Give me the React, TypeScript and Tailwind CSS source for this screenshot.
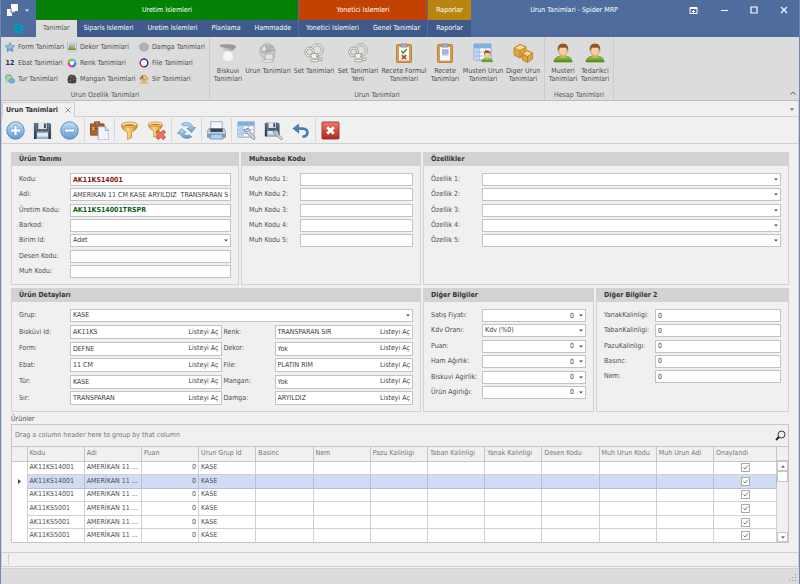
import { useState } from "react"
import type { ReactNode } from "react"
import clsx from "clsx"

const FIELD = "min-w-0 border border-[#c3c3c3] bg-white"

/* ---------- icons ---------- */

function Svg({ size = 20, children }: { size?: number; children: ReactNode }) {
  return <svg width={size} height={size} viewBox="0 0 20 20" aria-hidden="true" className="block shrink-0">{children}</svg>
}

function Gradients() {
  return (
    <svg width="0" height="0" className="absolute" aria-hidden="true">
      <defs>
        <linearGradient id="blue" x1="0" y1="0" x2="0" y2="1"><stop offset="0" stopColor="#c3e1f6" /><stop offset="1" stopColor="#5b9cd3" /></linearGradient>
        <linearGradient id="gold" x1="0" y1="0" x2="1" y2="0"><stop offset="0" stopColor="#d98c1f" /><stop offset=".4" stopColor="#fbdc8c" /><stop offset="1" stopColor="#cf8016" /></linearGradient>
        <linearGradient id="green" x1="0" y1="0" x2="0" y2="1"><stop offset="0" stopColor="#a5d04b" /><stop offset="1" stopColor="#4b8a17" /></linearGradient>
        <linearGradient id="red" x1="0" y1="0" x2="0" y2="1"><stop offset="0" stopColor="#ec7b6a" /><stop offset="1" stopColor="#b3261a" /></linearGradient>
        <linearGradient id="navy" x1="0" y1="0" x2="0" y2="1"><stop offset="0" stopColor="#5c6f88" /><stop offset="1" stopColor="#27384f" /></linearGradient>
        <linearGradient id="grey" x1="0" y1="0" x2="1" y2="0"><stop offset="0" stopColor="#e9e7e5" /><stop offset="1" stopColor="#8f8a86" /></linearGradient>
      </defs>
    </svg>
  )
}

function Wrench() {
  return (
    <path
      d="M8 8.500c-.8 2.800.8 5.200 3.800 5l4.700 5.500c1.400 1.300 3.300-.5 2.200-2l-4.900-4.800c.7-2.800-1.200-5-4-4.700l2.200 2.500-1.400 1.700z"
      fill="#dbe0e6" stroke="#66727f" strokeWidth=".8"
    />
  )
}

function Floppy() {
  return (
    <g>
      <path d="M1 2h3v9h12V2h1.500L19 3.500V19H1z" fill="url(#navy)" />
      <path d="M4 2h12v9H4z" fill="#4c5f78" />
      <path d="M5.500 2h9v6.500h-9z" fill="#e3e8ed" />
      <path d="M11.500 2.800h2v4.700h-2z" fill="#34455c" />
      <path d="M4 12h12v7H4z" fill="#dfe7ef" />
      <path d="M4 16.500h12V19H4z" fill="#8fb4d6" />
    </g>
  )
}

function Person() {
  return (
    <g>
      <path d="M1 19c0-4 3-5.500 7-6h4c4 .5 7 2 7 6z" fill="url(#green)" stroke="#53861f" strokeWidth=".6" />
      <path d="M7.500 11h5v2.500l-2.500 2-2.500-2z" fill="#eab382" />
      <ellipse cx="10" cy="7.500" rx="4" ry="5.500" fill="#f7d0a2" stroke="#a96b35" strokeWidth=".5" />
      <path d="M5 9C3.900 3.500 6 .6 10 .6s6.100 2.900 5 8.400c-.5-2.500-1-3.900-2.200-4.600-2 .6-4 .4-5.600 0C6 5.500 5.400 7.200 5 9z" fill="#9a5523" />
    </g>
  )
}

function Plates() {
  return (
    <g fill="#eeeeea" stroke="#93938d" strokeWidth=".8">
      <ellipse cx="10.500" cy="17.500" rx="4.500" ry="1.400" />
      <circle cx="13" cy="7" r="6.300" />
      <circle cx="13" cy="7" r="4.200" fill="#e0e0dc" />
      <circle cx="5.500" cy="9" r="4.900" />
      <circle cx="5.500" cy="9" r="3" fill="#e0e0dc" />
      <path d="M7 10.500h6c.3 3.500-.7 5.500-3 5.500s-3.300-2-3-5.500z" />
      <path d="M13 11.500c2.200-.3 2.200 2.500 0 2.700" fill="none" />
      <path d="M14.500 15h3.500v2.500h-3.500z" />
    </g>
  )
}

function Clipboard() {
  return (
    <g>
      <rect x="2.500" y="1.500" width="15" height="18" rx="1" fill="#d99a4b" stroke="#a96a22" strokeWidth=".7" />
      <path d="M5 4h10v13.500H5z" fill="#f7faff" />
      <path d="M7 .8h6v3.400H7z" fill="#a7afb8" stroke="#6e7781" strokeWidth=".5" />
    </g>
  )
}

function Funnel() {
  return (
    <g>
      <path d="M1.800 4c0 3.500 1.500 6 6.200 7.500v7.800l4-1.800v-6c4.700-1.500 6.200-4 6.200-7.500z" fill="url(#gold)" stroke="#b77714" strokeWidth=".7" />
      <ellipse cx="10" cy="3.800" rx="8.200" ry="2.700" fill="#fbe4a6" stroke="#b77714" strokeWidth=".7" />
      <path d="M4 4.500c2 1.300 10 1.300 12 0-2-1.500-10-1.500-12 0z" fill="#c57c1a" />
    </g>
  )
}

function Sheet() {
  return (
    <g>
      <path d="M1 1h17v16H1z" fill="#f8fbff" stroke="#7191b8" strokeWidth=".8" />
      <path d="M1 1h17v4H1z" fill="#78b1e0" />
      <path d="M1 5h5.500v12H1z" fill="#b9d8f1" />
      <path d="M1 5h17M1 9h17M1 13h17M6.600 1v16M12.300 1v16" stroke="#9bb5d2" strokeWidth=".7" />
    </g>
  )
}

const ICONS: Record<string, ReactNode> = {
  star: <path d="M10 1l2.800 6 6.400.8-4.700 4.500 1.200 6.500L10 15.600l-5.700 3.200 1.200-6.500L.8 7.800 7.200 7z" fill="url(#blue)" stroke="#3a79b5" strokeWidth="1.300" />,
  shapes: (
    <g strokeWidth="1">
      <circle cx="7" cy="7" r="6" fill="#8ec4ed" stroke="#4c8dc6" />
      <rect x="3" y="4" width="11" height="11" rx="1" fill="#bfe08c" stroke="#6b9e3a" />
      <rect x="8" y="9" width="11" height="9" rx="4" fill="#6fb5ea" stroke="#3a79b5" />
    </g>
  ),
  picture: (
    <g>
      <path d="M1 2h18v16H1z" fill="#f5f8fb" stroke="#7c93b0" />
      <path d="M3 4h14v12H3z" fill="#8fc3ec" />
      <path d="M3 16v-4l4-4 4 4 3-2 3 3v3z" fill="#5d9736" />
      <path d="M7 7h7v6H7z" fill="#e7a42f" />
    </g>
  ),
  colors: (
    <g strokeWidth="5" fill="none">
      <path d="M10 3.500A6.500 6.500 0 0 1 16.500 10" stroke="#52c4e8" />
      <path d="M16.500 10A6.500 6.500 0 0 1 10 16.500" stroke="#4b6fe0" />
      <path d="M10 16.500A6.500 6.500 0 0 1 3.500 10" stroke="#e545a0" />
      <path d="M3.500 10A6.500 6.500 0 0 1 10 3.500" stroke="#7bc94a" />
      <circle cx="10" cy="10" r="4" fill="#fff" stroke="none" />
    </g>
  ),
  stone: (
    <g>
      <path d="M3 4l5-3 8 2 3 6-1 9-7 1-9-1-1-7z" fill="#4e4145" />
      <path d="M5 6l4-2 3 2-4 2zM12 10l4-1 1 2-4 2zM4 12l4-1 1 2-4 2z" fill="#75676b" />
    </g>
  ),
  stamp: (
    <g fill="none" stroke="#8b8b8b" strokeWidth="1.500">
      <circle cx="10" cy="10" r="8" />
      <circle cx="10" cy="10" r="5" />
      <path d="M0 8h20v4H0z" fill="#cfcfcf" strokeWidth="1" />
      <path d="M3 10h14" strokeDasharray="2 1" />
    </g>
  ),
  ring: (
    <g fill="none" strokeWidth="3">
      <path d="M10 2.500a7.500 7.500 0 0 1 0 15" stroke="#30306f" />
      <path d="M10 17.500a7.500 7.500 0 0 1 0-15" stroke="#a0306a" />
      <path d="M4.700 4.700A7.500 7.500 0 0 1 15.300 4.700" stroke="#3c48a8" />
      <circle cx="10" cy="10" r="6" fill="#f8f8fa" stroke="none" />
    </g>
  ),
  bucket: (
    <g>
      <path d="M5 5l7-3 6 8-8 6-6-5z" fill="#edc372" stroke="#8c6a2c" />
      <path d="M5 5c-4 1-4 5-3 8 1-3 1-4 3-5z" fill="#b6502a" />
      <path d="M7 2v7l4 2" stroke="#56534f" fill="none" strokeWidth="1.500" />
      <path d="M2 17h16v2H2z" fill="#e4a12d" />
    </g>
  ),
  biscuit: (
    <g>
      <path d="M1.500 3c1 3.500 4 5.500 8 5.500S17 6.500 18 3.500z" fill="url(#grey)" />
      <ellipse cx="9.800" cy="3.200" rx="8.300" ry="2" fill="#9d9691" transform="rotate(3 10 3)" />
      <circle cx="10" cy="13.500" r="6" fill="#eeedec" stroke="#cfcecc" strokeWidth=".7" />
      <circle cx="10" cy="13" r="4" fill="#f8f7f6" />
    </g>
  ),
  product: (
    <g stroke="#a3a8a6" strokeWidth=".7">
      <circle cx="9.500" cy="8.500" r="7.800" fill="#c9cccb" />
      <circle cx="6.500" cy="6" r="3" fill="#dfe2e1" />
      <circle cx="12" cy="5.500" r="3.300" fill="#b9bebc" />
      <path d="M3 10l4-2 3 1 3-2 4 1M8 2l1 5-2 6M13 3l-2 5" fill="none" stroke="#8f9694" />
      <path d="M7 11h8v6H7z" fill="#e2e4e3" />
      <path d="M15 12.500c2.500-.5 2.500 3 0 3" fill="none" />
      <ellipse cx="10" cy="18" rx="6" ry="1.300" fill="#eceded" />
    </g>
  ),
  plates: <Plates />,
  clipCheck: (
    <g>
      <Clipboard />
      <path d="M7.500 8l1.800 2 3.500-4" stroke="#3f9a34" strokeWidth="1.600" fill="none" />
      <path d="M7.800 12.200l4.400 4M12.200 12.200l-4.400 4" stroke="#cf3a2c" strokeWidth="1.700" />
    </g>
  ),
  clipText: (
    <g>
      <Clipboard />
      <path d="M7 6h6.500v6.500H7z" fill="#a9c4e6" />
      <path d="M7 8h6.500M7 10h6.500" stroke="#86a7d2" strokeWidth=".7" />
    </g>
  ),
  sheetPerson: <g><Sheet /><g transform="translate(8 7) scale(.62)"><Person /></g></g>,
  boxes: (
    <g stroke="#a8721a" strokeWidth=".7">
      <path d="M1 5l6-3.500L13 4v7l-6 4-6-3z" fill="#e2a53a" />
      <path d="M1 5l6-3.500L13 4 7 7.500z" fill="#fbdc8f" />
      <path d="M7 7.500V15" />
      <path d="M9.500 10.500l4.500-3 5.500 2.500v6l-5 3.500-5-2.500z" fill="#e2a53a" />
      <path d="M9.500 10.500l4.500-3 5.500 2.500-5 3.500z" fill="#fbdc8f" />
      <path d="M14.500 13.500v6" />
    </g>
  ),
  person: <Person />,
  add: (
    <g>
      <circle cx="10" cy="10" r="9.200" fill="url(#blue)" stroke="#6187ae" strokeWidth="1" />
      <path d="M10 4.500v11M4.500 10h11" stroke="#5d8fc0" strokeWidth="3.600" />
      <path d="M10 5v10M5 10h10" stroke="#fff" strokeWidth="2.400" />
    </g>
  ),
  remove: (
    <g>
      <circle cx="10" cy="10" r="9.200" fill="url(#blue)" stroke="#6187ae" strokeWidth="1" />
      <path d="M4.500 10h11" stroke="#5d8fc0" strokeWidth="3.600" />
      <path d="M5 10h10" stroke="#fff" strokeWidth="2.400" />
    </g>
  ),
  save: <Floppy />,
  paste: (
    <g>
      <path d="M5 3V1.200h5V3" fill="none" stroke="#6b3d1c" strokeWidth="1.300" />
      <rect x="0" y="3" width="15" height="12" rx="1" fill="#a86431" stroke="#6f3c17" strokeWidth=".7" />
      <path d="M0 8h15" stroke="#6f3c17" />
      <path d="M2.500 6.500h2v3h-2z" fill="#f1c35c" />
      <path d="M8.500 6H16l4 4v10H8.500z" fill="#f0f5fb" stroke="#7f93ad" strokeWidth=".8" />
      <path d="M16 6v4h4" fill="#cddcec" stroke="#7f93ad" strokeWidth=".7" />
    </g>
  ),
  filter: <Funnel />,
  unfilter: (
    <g>
      <g transform="scale(.88)"><Funnel /></g>
      <path d="M10.500 10.500l8 8M18.500 10.500l-8 8" stroke="#b8402c" strokeWidth="4" />
      <path d="M11 11l7 7M18 11l-7 7" stroke="#f0745e" strokeWidth="2.800" />
    </g>
  ),
  refresh: (
    <g fill="url(#blue)" stroke="#5d8fc0" strokeWidth=".8">
      <path d="M4.500 3.500C9 .2 15 1.500 17 7l2.500-.2-4 5.200L10.500 8l2.700-.5C12 4.800 9.500 4 7.500 5.500z" />
      <path d="M15.500 16.500C11 19.800 5 18.500 3 13l-2.500.2L4.500 8l5 4-2.700.5c1.200 2.700 3.700 3.500 5.700 2z" />
    </g>
  ),
  print: (
    <g>
      <path d="M4 .8h12V9H4z" fill="#f3f7fc" stroke="#7b8ba1" strokeWidth=".7" />
      <path d="M2 8h16l2 4v5H0v-5z" fill="#c6ced9" stroke="#6a7b91" strokeWidth=".7" />
      <path d="M3.500 8h13v3.500h-13z" fill="#35455b" />
      <path d="M0 13.500h20V17H0z" fill="#8c9aad" />
      <path d="M4 14h12l1 5H3z" fill="#a8d3f5" stroke="#5a80a8" strokeWidth=".7" />
    </g>
  ),
  sheetTool: <g><Sheet /><Wrench /></g>,
  saveTool: <g><g transform="scale(.86)"><Floppy /></g><g transform="translate(3 3) scale(.86)"><Wrench /></g></g>,
  undo: (
    <g>
      <path d="M5 8h7.500c6.500 0 6.500 8.500-.5 8.500" fill="none" stroke="#4a7fb5" strokeWidth="2.800" />
      <path d="M8.500 2.500v11L1.500 8z" fill="#4a7fb5" />
    </g>
  ),
  close: (
    <g>
      <rect x="1" y="1" width="18" height="18" rx="1" fill="url(#red)" stroke="#93281f" strokeWidth=".8" />
      <path d="M6.500 6.500l7 7M13.500 6.500l-7 7" stroke="#fff" strokeWidth="3" />
    </g>
  ),
}

function Arrow({ up = false }: { up?: boolean }) {
  return (
    <svg width="4" height="3" viewBox="0 0 4 3" aria-hidden="true" className="block shrink-0">
      <path d={up ? "M0 2.500h4L2 .5z" : "M0 .5h4L2 2.500z"} fill="#4b4b4b" />
    </svg>
  )
}

/* ---------- title bar and ribbon ---------- */

const TAB_GROUPS = [
  { title: "Uretim Islemleri", color: "bg-[#058205]", width: "w-[262px]", tabs: ["Tanimlar", "Siparis Islemleri", "Uretim Islemleri", "Planlama", "Hammadde"] },
  { title: "Yonetici Islemleri", color: "bg-[#c24103]", width: "w-[128px]", tabs: ["Yonetici Islemleri", "Genel Tanimlar"] },
  { title: "Raporlar", color: "bg-[#b8860f]", width: "w-[43px]", tabs: ["Raporlar"] },
]

function TitleBar() {
  const [tab, setTab] = useState("Tanimlar")
  return (
    <header className="flex h-[37px] bg-[#4e6d9e] text-white">
      <div className="flex w-[35px] shrink-0 flex-col">
        <div className="flex h-5 items-center gap-[7px] pl-[6px]">
          <svg width="11" height="12" viewBox="0 0 11 12" aria-hidden="true">
            <path d="M4 0h7v7H8v2H5v3H0V5h4z" fill="#fff" />
            <path d="M4 4.500v3.800h4" fill="none" stroke="#4e6d9e" />
          </svg>
          <svg width="4" height="3" viewBox="0 0 4 3" aria-hidden="true"><path d="M0 .5h4L2 2.500z" fill="#fff" /></svg>
        </div>
        <button aria-label="Menu" className="flex h-[17px] items-center justify-center">
          <svg width="11" height="11" viewBox="0 0 11 11">
            <circle cx="5.500" cy="5.500" r="5" fill="#0d9dbd" />
            <path d="M.5 5.500h10M5.500.5v10M2 2.500c2 1.500 5 1.500 7 0M2 8.500c2-1.500 5-1.500 7 0" fill="none" stroke="#087a9c" strokeWidth=".7" />
          </svg>
        </button>
      </div>
      <div className="flex gap-px">
        {TAB_GROUPS.map(group => (
          <div key={group.title} className={clsx("flex flex-col", group.width)}>
            <div className={clsx("flex h-5 items-center justify-center", group.color)}>{group.title}</div>
            <div className="flex h-[17px] justify-between bg-[#3d5a8a]">
              {group.tabs.map(name => (
                <button
                  key={name}
                  onClick={() => setTab(name)}
                  className={clsx("flex-auto whitespace-nowrap", name === tab ? "bg-[#dcdcdc] text-[#555]" : "text-white")}
                >
                  {name}
                </button>
              ))}
            </div>
          </div>
        ))}
      </div>
      <div className="flex h-5 flex-1 items-center">
        <h1 className="flex-1 pr-3 text-center">Urun Tanimlari - Spider MRP</h1>
        <div className="flex items-center gap-[22px] pr-[11px]">
          <button aria-label="Ribbon display options">
            <svg width="9" height="9" viewBox="0 0 9 9"><path d="M1 1.500h7v6H1zM1 2.500h7M4.500 4v3M3 5.500h3" fill="none" stroke="#fff" /></svg>
          </button>
          <button aria-label="Minimize">
            <svg width="8" height="8" viewBox="0 0 8 8"><path d="M1 4.500h7" stroke="#fff" /></svg>
          </button>
          <button aria-label="Maximize">
            <svg width="8" height="8" viewBox="0 0 8 8"><path d="M1 1h6v6H1z" fill="none" stroke="#fff" strokeWidth="1.200" /></svg>
          </button>
          <button aria-label="Close">
            <svg width="8" height="8" viewBox="0 0 8 8"><path d="M1 1l6 6M7 1L1 7" stroke="#fff" strokeWidth="1.100" /></svg>
          </button>
        </div>
      </div>
    </header>
  )
}

const SMALL = [
  [["star", "Form Tanimlari"], ["12", "Ebat Tanimlari"], ["shapes", "Tur Tanimlari"]],
  [["picture", "Dekor Tanimlari"], ["colors", "Renk Tanimlari"], ["stone", "Mangan Tanimlari"]],
  [["stamp", "Damga Tanimlari"], ["ring", "File Tanimlari"], ["bucket", "Sir Tanimlari"]],
]

const LARGE = [
  { icon: "biscuit", lines: ["Biskuvi", "Tanimlari"], width: "w-8" },
  { icon: "product", lines: ["Urun Tanimlari"], width: "w-12" },
  { icon: "plates", lines: ["Set Tanimlari"], width: "w-11" },
  { icon: "plates", lines: ["Set Tanimlari", "Yeni"], width: "w-11" },
  { icon: "clipCheck", lines: ["Recete Formul", "Tanimlari"], width: "w-12" },
  { icon: "clipText", lines: ["Recete", "Tanimlari"], width: "w-[34px]" },
  { icon: "sheetPerson", lines: ["Musteri Urun", "Tanimlari"], width: "w-[42px]" },
  { icon: "boxes", lines: ["Diger Urun", "Tanimlari"], width: "w-[38px]" },
]

const ACCOUNTS = [
  { icon: "person", lines: ["Musteri", "Tanimlari"], width: "w-8" },
  { icon: "person", lines: ["Tedarikci", "Tanimlari"], width: "w-8" },
]

function RibbonGroup({ caption, children }: { caption: string; children: ReactNode }) {
  return (
    <section className="flex flex-col justify-between border-r border-[#cbcbcb] px-[2px]">
      <div className="flex">{children}</div>
      <h2 className="h-[10px] text-center leading-[10px] text-[#555]">{caption}</h2>
    </section>
  )
}

function LargeButton({ icon, lines, width }: { icon: string; lines: string[]; width: string }) {
  return (
    <button className={clsx("flex flex-col items-center gap-1 whitespace-nowrap pt-[6px] leading-[8px]", width)}>
      <Svg>{ICONS[icon]}</Svg>
      <span className="flex flex-col">{lines.map(line => <span key={line}>{line}</span>)}</span>
    </button>
  )
}

function Ribbon() {
  return (
    <div className="flex h-16 border-b border-[#bdbdbd] bg-[#dcdcdc] text-[#4d4d4d]">
      <RibbonGroup caption="Urun Ozellik Tanimlari">
        <div className="flex pl-[2px] pt-[2px]">
          {SMALL.map((column, i) => (
            <div key={i} className={clsx("flex flex-col", i === 0 && "w-[62px]", i === 1 && "w-[72px]", i === 2 && "w-[68px]")}>
              {column.map(([icon, name]) => (
                <button key={name} className="flex h-4 items-center gap-[3px] whitespace-nowrap">
                  {icon === "12" ? <span className="w-[10px] font-bold text-[#1e2b47]">12</span> : <Svg size={10}>{ICONS[icon]}</Svg>}
                  {name}
                </button>
              ))}
            </div>
          ))}
        </div>
      </RibbonGroup>
      <RibbonGroup caption="Urun Tanimlari">{LARGE.map(b => <LargeButton key={b.icon + b.lines.join()} {...b} />)}</RibbonGroup>
      <RibbonGroup caption="Hesap Tanimlari">{ACCOUNTS.map(b => <LargeButton key={b.lines[0]} {...b} />)}</RibbonGroup>
      <button aria-label="Collapse ribbon" className="ml-auto self-end pb-[5px] pr-[3px]">
        <svg width="6" height="4" viewBox="0 0 6 4"><path d="M.5 3.500L3 1l2.500 2.500" fill="none" stroke="#555" /></svg>
      </button>
    </div>
  )
}

const TOOLS = [
  [["add", "Yeni"], ["save", "Kaydet"], ["remove", "Sil"]],
  [["paste", "Yapistir"]],
  [["filter", "Filtre"], ["unfilter", "Filtreyi kaldir"]],
  [["refresh", "Yenile"]],
  [["print", "Yazdir"]],
  [["sheetTool", "Tablo ayarlari"], ["saveTool", "Ayarlari kaydet"], ["undo", "Geri al"]],
  [["close", "Kapat"]],
]

function DocumentBar() {
  return (
    <>
      <div className="flex h-4 items-end justify-between border-b border-[#d0d0d0] pr-1 pt-px">
        <div className="-mb-px flex h-[15px] items-center gap-[7px] border border-b-0 border-[#d0d0d0] bg-[#f0f0f0] px-[3px] font-bold text-[#333]">
          Urun Tanimlari
          <button aria-label="Close tab">
            <svg width="6" height="6" viewBox="0 0 6 6"><path d="M.5.5l5 5M5.500.5l-5 5" stroke="#777" strokeWidth=".8" /></svg>
          </button>
        </div>
        <button aria-label="Open tabs" className="self-center"><Arrow /></button>
      </div>
      <div className="flex h-[27px] items-center border-b border-[#d0d0d0]">
        {TOOLS.map((group, i) => (
          <div key={i} className="flex items-center">
            {i > 0 && <div className="mx-px h-6 w-px bg-[#d9d9d9]" />}
            {group.map(([icon, label]) => (
              <button key={icon} aria-label={label} className="flex w-[27px] justify-center"><Svg size={19}>{ICONS[icon]}</Svg></button>
            ))}
          </div>
        ))}
      </div>
    </>
  )
}

/* ---------- form ---------- */

function Panel({ title, children }: { title: string; children: ReactNode }) {
  return (
    <section className="min-w-0 border border-[#d2d2d2]">
      <h2 className="h-[13px] bg-[#d2d2d2] pl-[7px] font-bold leading-[13px] text-[#333]">{title}</h2>
      <div className="px-[7px] pt-[7px]">{children}</div>
    </section>
  )
}

type RowProps = { label: string; value?: string; kind?: "text" | "select" | "calc" | "lookup"; tone?: string }

function Row({ label, value = "", kind = "text", tone = "text-[#3c3c3c]" }: RowProps) {
  const id = label.toLowerCase().replace(/[^\p{L}\d]+/gu, "-")
  const size = kind === "lookup" ? "h-[14px]" : "h-[13px]"
  return (
    <div className={clsx("flex items-center", size)}>
      <label htmlFor={id} className="w-[51px] shrink-0 whitespace-nowrap">{label}</label>
      {kind === "text" && <input id={id} defaultValue={value} className={clsx(FIELD, "h-full flex-1 px-[2px]", tone)} />}
      {kind === "select" && (
        <div className="relative h-full min-w-0 flex-1">
          <select id={id} defaultValue={value} className={clsx(FIELD, "block h-full w-full appearance-none px-[2px]", tone)}>
            <option>{value}</option>
          </select>
          <span className="pointer-events-none absolute inset-y-0 right-[3px] flex items-center"><Arrow /></span>
        </div>
      )}
      {kind === "calc" && (
        <div className={clsx(FIELD, "flex h-full flex-1 items-center pr-[2px]", tone)}>
          <input id={id} defaultValue={value} className="h-full w-0 flex-1 text-right" />
          <button aria-label={`${label} hesapla`} className="pl-[5px]"><Arrow /></button>
        </div>
      )}
      {kind === "lookup" && (
        <div className={clsx(FIELD, "flex h-full flex-1 items-center px-[2px]", tone)}>
          <input id={id} defaultValue={value} className="h-full w-0 flex-1" />
          <button className="whitespace-nowrap">Listeyi Aç</button>
        </div>
      )}
    </div>
  )
}

const LOOKUPS = [
  [["Bisküvi Id:", "AK11KS"], ["Form:", "DEFNE"], ["Ebat:", "11 CM"], ["Tür:", "KASE"], ["Sır:", "TRANSPARAN"]],
  [["Renk:", "TRANSPARAN SIR"], ["Dekor:", "Yok"], ["File:", "PLATİN RİM"], ["Mangan:", "Yok"], ["Damga:", "ARYILDIZ"]],
]

function ProductForm() {
  return (
    <>
      <div className="grid h-[133px] grid-cols-[228fr_180fr_366fr] gap-[2px]">
        <Panel title="Ürün Tanımı">
          <div className="flex h-[105px] flex-col justify-between">
            <Row label="Kodu:" value="AK11KS14001" tone="font-bold text-[#8b1515]" />
            <Row label="Adi:" value="AMERİKAN 11 CM KASE ARYILDIZ  TRANSPARAN SIR" />
            <Row label="Üretim Kodu:" value="AK11KS14001TRSPR" tone="font-bold text-[#0b5f1b]" />
            <Row label="Barkod:" />
            <Row label="Birim Id:" value="Adet" kind="select" />
            <Row label="Desen Kodu:" />
            <Row label="Muh Kodu:" />
          </div>
        </Panel>
        <Panel title="Muhasebe Kodu">
          <div className="flex h-[74px] flex-col justify-between">
            {[1, 2, 3, 4, 5].map(n => <Row key={n} label={`Muh Kodu ${n}:`} />)}
          </div>
        </Panel>
        <Panel title="Özellikler">
          <div className="flex h-[74px] flex-col justify-between">
            {[1, 2, 3, 4, 5].map(n => <Row key={n} label={`Özellik ${n}:`} kind="select" />)}
          </div>
        </Panel>
      </div>
      <div className="mt-[3px] grid h-[124px] grid-cols-[410fr_171fr_193fr] gap-[2px]">
        <Panel title="Ürün Detayları">
          <Row label="Grup:" value="KASE" kind="select" />
          <div className="mt-[3px] grid h-20 grid-cols-[202fr_189fr] gap-[2px]">
            {LOOKUPS.map((column, i) => (
              <div key={i} className="flex flex-col justify-between">
                {column.map(([label, value]) => <Row key={label} label={label} value={value} kind="lookup" />)}
              </div>
            ))}
          </div>
        </Panel>
        <Panel title="Diğer Bilgiler">
          <div className="flex h-[90px] flex-col justify-between">
            <Row label="Satış Fiyatı:" value="0" kind="calc" />
            <Row label="Kdv Oranı:" value="Kdv (%0)" kind="select" />
            <Row label="Puan:" value="0" kind="calc" />
            <Row label="Ham Ağırlık:" value="0" kind="calc" />
            <Row label="Biskuvi Agirlik:" value="0" kind="calc" />
            <Row label="Ürün Agirlığı:" value="0" kind="calc" />
          </div>
        </Panel>
        <Panel title="Diğer Bilgiler 2">
          <div className="flex h-[74px] flex-col justify-between">
            {["YanakKalinligi:", "TabanKalinligi:", "PazuKalinligı:", "Basınc:", "Nem:"].map(label => <Row key={label} label={label} value="0" />)}
          </div>
        </Panel>
      </div>
    </>
  )
}

/* ---------- product grid ---------- */

const COLUMNS = ["Kodu", "Adi", "Puan", "Urun Grup Id", "Basinc", "Nem", "Pazu Kalinligi", "Taban Kalinligi", "Yanak Kalinligi", "Desen Kodu", "Muh Urun Kodu", "Muh Urun Adi", "Onaylandi"]
const CODES = ["AK11KS14001", "AK11KS14001", "AK11KS14001", "AK11KS5001", "AK11KS5001", "AK11KS5001"]

function ProductGrid() {
  const [selected, setSelected] = useState(1)
  return (
    <section>
      <h2 className="mt-[3px] h-[9px] leading-[9px] text-[#4d4d4d]">Ürünler</h2>
      <div className="border border-[#c6c6c6]">
        <div className="flex h-[21px] items-center justify-between pl-[3px] pr-[2px] text-[#777]">
          Drag a column header here to group by that column
          <button aria-label="Search">
            <svg width="11" height="11" viewBox="0 0 11 11"><circle cx="6.500" cy="4.500" r="3.500" fill="none" stroke="#333" /><path d="M4 7L1 10" stroke="#222" strokeWidth="1.800" /></svg>
          </button>
        </div>
        <div className="flex h-24 overflow-hidden border-t border-[#c6c6c6]">
          <div className="min-w-0 flex-1">
            <table className="h-24 w-full table-fixed border-collapse whitespace-nowrap">
              <thead>
                <tr className="h-[14px] text-left text-[#777]">
                  <th className="w-[15px] border-b border-r border-[#c6c6c6]" />
                  {COLUMNS.map(name => <th key={name} className={clsx("border-b border-r border-[#c6c6c6] px-[2px] font-normal", name === "Onaylandi" && "w-[63px]")}>{name}</th>)}
                </tr>
              </thead>
              <tbody className="bg-white">
                {CODES.map((code, i) => (
                  <tr key={i} onClick={() => setSelected(i)} className={clsx("h-[13px]", i === selected && "bg-[#d0dcf4]")}>
                    <td className="border-r border-[#d0d0d0] bg-white">
                      {i === selected && <svg width="3" height="5" viewBox="0 0 3 5" className="mx-auto block"><path d="M0 0v5l3-2.500z" fill="#444" /></svg>}
                    </td>
                    {COLUMNS.map((name, c) => (
                      <td key={name} className={clsx("overflow-hidden border-b border-r px-[2px]", i === selected ? "border-[#b3bfd6]" : "border-[#d0d0d0]", c === 2 && "text-right")}>
                        {c === 0 && code}
                        {c === 1 && "AMERİKAN 11 ..."}
                        {c === 2 && "0"}
                        {c === 3 && "KASE"}
                        {c === 12 && (
                          <span className="relative mx-auto block h-[9px] w-[9px]">
                            <input type="checkbox" defaultChecked aria-label={`Onaylandi ${i + 1}`} className="block h-[9px] w-[9px] appearance-none border border-[#aaa] bg-white" />
                            <svg width="9" height="9" viewBox="0 0 9 9" className="pointer-events-none absolute inset-0"><path d="M2.500 4.500L4 6l3-3.500" fill="none" stroke="#777" /></svg>
                          </span>
                        )}
                      </td>
                    ))}
                  </tr>
                ))}
              </tbody>
            </table>
          </div>
          <div className="flex w-[11px] shrink-0 flex-col">
            <div className="h-[14px] border-b border-[#c6c6c6]" />
            <button aria-label="Scroll up" className="flex h-[10px] items-center justify-center border border-[#c6c6c6] bg-white"><Arrow up /></button>
            <div className="h-[11px] border border-[#c6c6c6] bg-white" />
            <div className="flex-1" />
            <button aria-label="Scroll down" className="flex h-[10px] items-center justify-center border border-[#c6c6c6] bg-white"><Arrow /></button>
          </div>
        </div>
      </div>
    </section>
  )
}

export default function App() {
  return (
    <div className="flex min-h-screen flex-col border-x border-b border-[#6f88b3] bg-[#f0f0f0] font-['DejaVu_Sans_Condensed','DejaVu_Sans',sans-serif] text-[7px] leading-[9px] text-[#4d4d4d]">
      <Gradients />
      <TitleBar />
      <Ribbon />
      <main className="flex flex-1 flex-col border-x border-[#d0d0d0]">
        <DocumentBar />
        <div className="flex-1 px-[9px] pb-[9px] pt-2">
          <ProductForm />
          <ProductGrid />
        </div>
        <div className="flex h-[15px] items-center border-y border-[#d0d0d0] pl-[6px]">
          <div className="h-[11px] w-px bg-[#d0d0d0]" />
        </div>
      </main>
      <footer className="mt-px flex h-4 items-end justify-end border-t border-[#cfcfcf] bg-[#dcdcdc] p-[2px]">
        <svg width="8" height="8" viewBox="0 0 8 8" aria-hidden="true">
          <path d="M6 0h1v1H6zM6 3h1v1H6zM6 6h1v1H6zM3 3h1v1H3zM3 6h1v1H3zM0 6h1v1H0z" fill="#9b9b9b" />
        </svg>
      </footer>
    </div>
  )
}
